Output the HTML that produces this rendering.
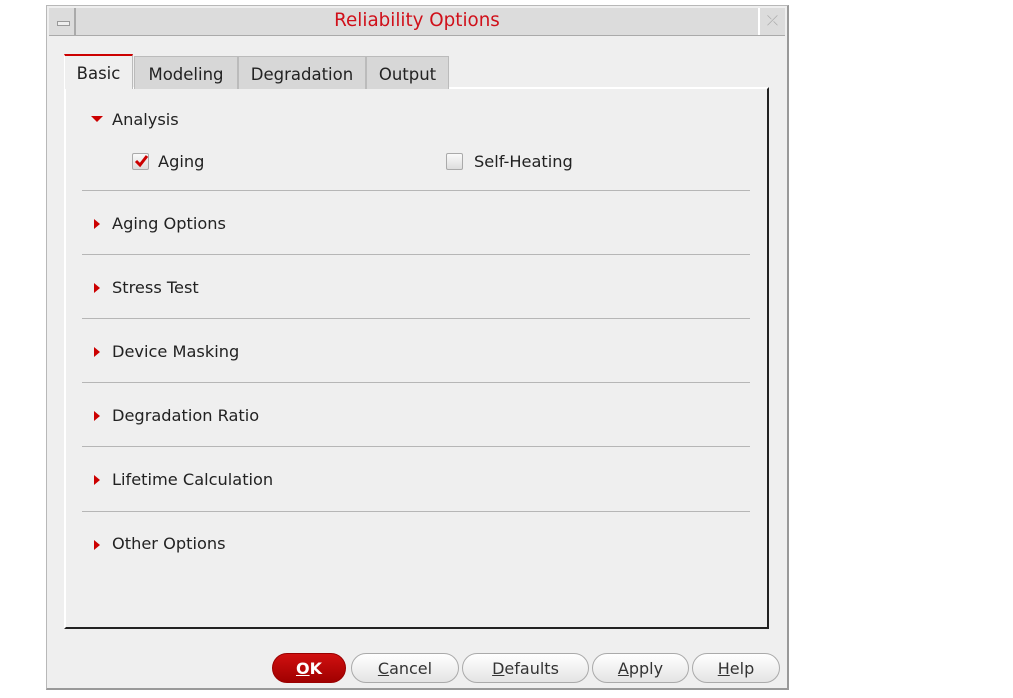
<!DOCTYPE html>
<html><head><style>
*{margin:0;padding:0;box-sizing:border-box}
body{width:1013px;height:698px;background:#fff;position:relative;overflow:hidden;font-family:"DejaVu Sans","Liberation Sans",sans-serif;font-size:14.5px;color:#222}
.win{position:absolute;left:46px;top:5px;width:743px;height:685px;background:#efefef;border:1px solid #b8b8b8;border-right:2px solid #999;border-bottom:2px solid #999}
.tb{position:absolute;left:2px;top:2px;width:736px;height:28px;background:#dcdcdc;border-bottom:1px solid #aaa}
.bmin{position:absolute;left:0;top:0;width:27px;height:27px;border-right:2px solid #aaa;background:#dcdcdc}
.bmin:after{content:"";position:absolute;left:8px;top:13px;width:11px;height:3px;border:1px solid #999;background:#eee}
.bx{position:absolute;right:0;top:0;width:27px;height:27px;border-left:2px solid #fff;color:#aaa;font-size:14px;text-align:center;line-height:26px}
.title{position:absolute;left:0;right:0;top:2px;text-align:center;color:#d0101a;font-size:18.3px}
.tab{position:absolute;top:56px;height:33px;background:#d7d7d7;border:1px solid #bbb;border-bottom:none;text-align:center;line-height:36px;font-size:16.5px}
.tab.a{background:#efefef;border-top:2px solid #c00;top:54px;height:35px;line-height:36px;border-left:1px solid #fff}
.panel{position:absolute;left:64px;top:87px;width:705px;height:542px;border-left:2px solid #fff;border-top:2px solid #fff;border-right:2px solid #222;border-bottom:2px solid #222}
.row{position:absolute;left:20px;font-size:16.2px}
.tri{position:absolute;width:0;height:0;border-top:5px solid transparent;border-bottom:5px solid transparent;border-left:6px solid #c00}
.down{position:absolute;width:0;height:0;border-left:6px solid transparent;border-right:6px solid transparent;border-top:6px solid #c00}
.sep{position:absolute;left:35px;width:668px;height:1px;background:#b6b6b6}
.cb{position:absolute;width:17px;height:17px;background:linear-gradient(#fafafa,#ddd);border:1px solid #aaa;border-radius:2px}
.btn{position:absolute;top:653px;height:30px;border:1px solid #aaa;border-radius:15px;background:linear-gradient(#fff,#e4e4e4);text-align:center;line-height:29px;font-size:16px;color:#333}
.btn u{text-decoration:underline}
</style></head><body>
<div class="win">
 <div class="tb"><div class="bmin"></div><div class="title">Reliability Options</div><div class="bx">⤫</div></div>
</div>
<div class="panel"></div>
<div class="tab a" style="left:64px;width:69px">Basic</div>
<div class="tab" style="left:134px;width:104px">Modeling</div>
<div class="tab" style="left:238px;width:128px">Degradation</div>
<div class="tab" style="left:366px;width:83px">Output</div>
<div class="down" style="left:91px;top:116px"></div>
<div class="row" style="left:112px;top:110px">Analysis</div>
<div class="cb" style="left:132px;top:153px"></div>
<svg style="position:absolute;left:133px;top:153px" width="16" height="16"><path d="M3 8 L7 12 L14 3" stroke="#c00" stroke-width="3" fill="none"/></svg>
<div class="row" style="left:158px;top:152px">Aging</div>
<div class="cb" style="left:446px;top:153px"></div>
<div class="row" style="left:474px;top:152px">Self-Heating</div>
<div class="sep" style="left:82px;top:190px"></div>
<div class="tri" style="left:94px;top:219px"></div><div class="row" style="left:112px;top:214px">Aging Options</div>
<div class="sep" style="left:82px;top:254px"></div>
<div class="tri" style="left:94px;top:283px"></div><div class="row" style="left:112px;top:278px">Stress Test</div>
<div class="sep" style="left:82px;top:318px"></div>
<div class="tri" style="left:94px;top:347px"></div><div class="row" style="left:112px;top:342px">Device Masking</div>
<div class="sep" style="left:82px;top:382px"></div>
<div class="tri" style="left:94px;top:411px"></div><div class="row" style="left:112px;top:406px">Degradation Ratio</div>
<div class="sep" style="left:82px;top:446px"></div>
<div class="tri" style="left:94px;top:475px"></div><div class="row" style="left:112px;top:470px">Lifetime Calculation</div>
<div class="sep" style="left:82px;top:511px"></div>
<div class="tri" style="left:94px;top:540px"></div><div class="row" style="left:112px;top:534px">Other Options</div>
<div class="btn" style="left:272px;width:74px;background:linear-gradient(#d01010,#a00000);border-color:#900;color:#fff;font-weight:bold"><u>O</u>K</div>
<div class="btn" style="left:351px;width:108px"><u>C</u>ancel</div>
<div class="btn" style="left:462px;width:127px"><u>D</u>efaults</div>
<div class="btn" style="left:592px;width:97px"><u>A</u>pply</div>
<div class="btn" style="left:692px;width:88px"><u>H</u>elp</div>
</body></html>
